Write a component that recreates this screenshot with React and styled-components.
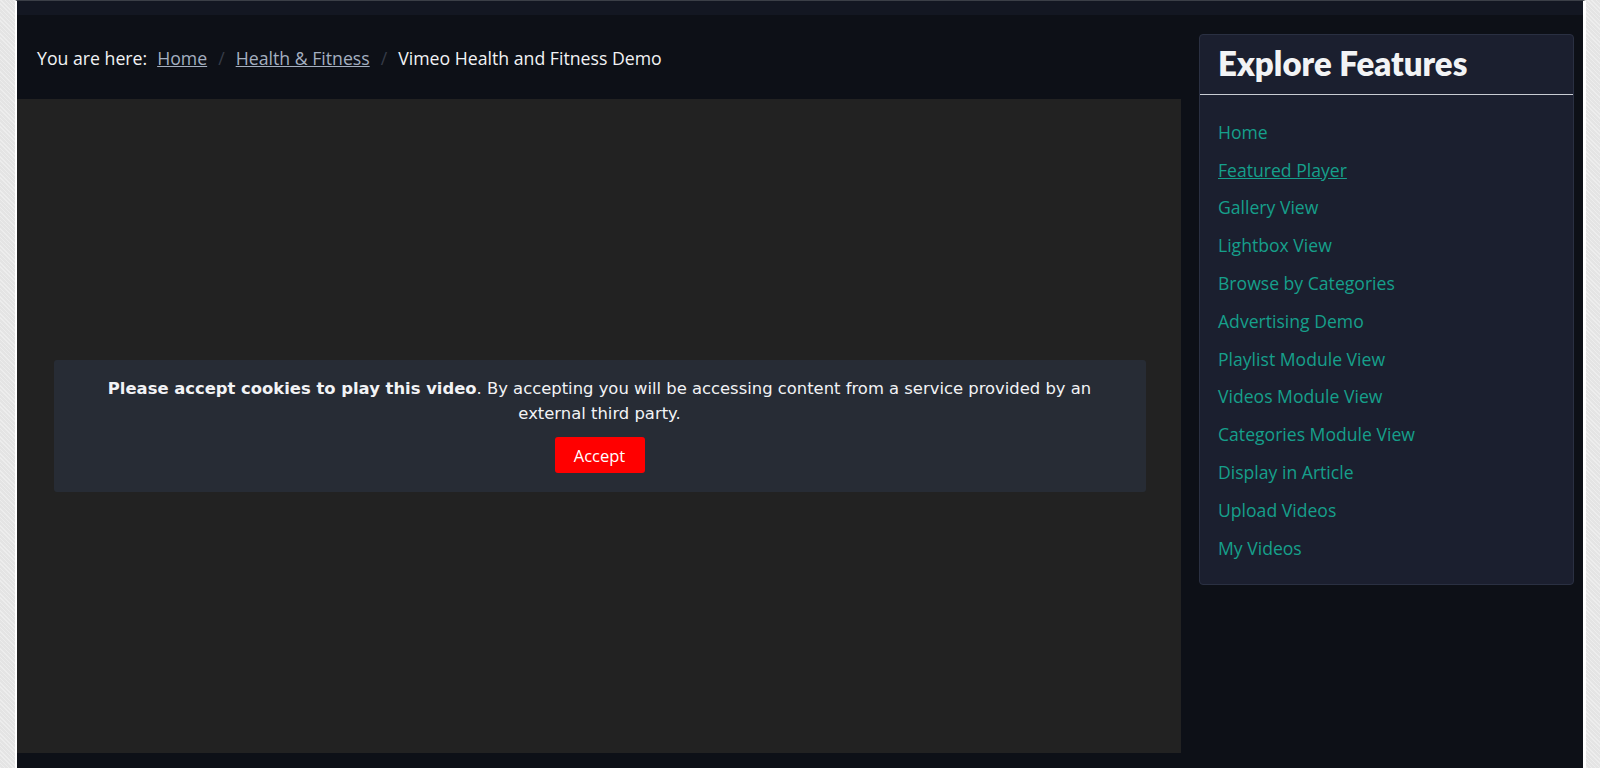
import * as React from "react";
import styled, { createGlobalStyle } from "styled-components";

const colors = {
  page: "#0d1017",
  band: "#131722",
  video: "#222222",
  notice: "#272c35",
  card: "#1b1f2f",
  cardBorder: "#2a3042",
  teal: "#169f8b",
  crumbLink: "#a4afc0",
  white: "#f2f3f5",
};

const GlobalStyle = createGlobalStyle`
  html, body {
    margin: 0;
    padding: 0;
    height: 100%;
    background-color: #e4e4e4;
    background-image: repeating-linear-gradient(45deg, rgba(255,255,255,0.35) 0 1px, transparent 1px 3px);
  }
  body {
    font-family: "Open Sans", "Noto Sans", sans-serif;
  }
  * { box-sizing: border-box; }
`;

const Frame = styled.div`
  margin-left: 15px;
  width: 1571px;
  height: 768px;
  border-left: 2px solid #ffffff;
  border-right: 3px solid #ffffff;
  border-top: 1px solid #3b3f47;
  background: ${colors.page};
  overflow: hidden;
`;

const TopBand = styled.div`
  height: 14px;
  background: ${colors.band};
`;

const Body = styled.div`
  display: flex;
  align-items: flex-start;
  gap: 18px;
`;

const Main = styled.main`
  width: 1164px;
  flex-shrink: 0;
`;

const Breadcrumb = styled.nav`
  height: 84px;
  display: flex;
  align-items: center;
  padding: 2px 0 0 20px;
  font-size: 17.7px;
  color: ${colors.white};
`;

const CrumbLabel = styled.span`
  margin-right: 10px;
`;

const CrumbLink = styled.a`
  color: ${colors.crumbLink};
  text-decoration: underline;
`;

const Divider = styled.span`
  color: #363c48;
  padding: 0 11px;
`;

const Player = styled.div`
  width: 1164px;
  height: 654px;
  background: ${colors.video};
  display: flex;
  align-items: center;
  justify-content: center;
`;

const Notice = styled.div`
  width: 1092px;
  margin-left: 1px;
  padding: 16px 40px 19px;
  background: ${colors.notice};
  border-radius: 3px;
  text-align: center;
  color: ${colors.white};
  font-family: "DejaVu Sans", Verdana, sans-serif;
  font-size: 16.4px;
  line-height: 25px;
`;

const AcceptButton = styled.button`
  margin-top: 11px;
  width: 90px;
  height: 36px;
  border: none;
  border-radius: 3px;
  background: #ff0000;
  color: #ffffff;
  font-family: "Open Sans", "Noto Sans", sans-serif;
  font-size: 16.5px;
  cursor: pointer;
`;

const Sidebar = styled.aside`
  width: 375px;
  margin-top: 19px;
  background: ${colors.card};
  border: 1px solid ${colors.cardBorder};
  border-radius: 4px;
`;

const SideTitle = styled.h3`
  margin: 0;
  padding: 8px 19px 11px 18px;
  font-family: Lato, "Open Sans", sans-serif;
  font-weight: 800;
  font-size: 33px;
  line-height: 40px;
  color: ${colors.white};
  border-bottom: 1px solid #c9ccd3;
`;

const LinkList = styled.ul`
  list-style: none;
  margin: 0;
  padding: 18px 19px 17px 18px;
`;

const LinkItem = styled.li`
  height: 37.8px;
  display: flex;
  align-items: center;
`;

const SideLink = styled.a`
  color: ${colors.teal};
  font-size: 17.6px;
  text-decoration: ${(p) => (p.$active ? "underline" : "none")};
`;

const features = [
  "Home",
  "Featured Player",
  "Gallery View",
  "Lightbox View",
  "Browse by Categories",
  "Advertising Demo",
  "Playlist Module View",
  "Videos Module View",
  "Categories Module View",
  "Display in Article",
  "Upload Videos",
  "My Videos",
];

export default function App() {
  return (
    <>
      <GlobalStyle />
      <Frame>
        <TopBand />
        <Body>
          <Main>
            <Breadcrumb>
              <CrumbLabel>You are here:</CrumbLabel>
              <CrumbLink href="#">Home</CrumbLink>
              <Divider>/</Divider>
              <CrumbLink href="#">Health &amp; Fitness</CrumbLink>
              <Divider>/</Divider>
              <span>Vimeo Health and Fitness Demo</span>
            </Breadcrumb>
            <Player>
              <Notice>
                <div>
                  <strong>Please accept cookies to play this video</strong>. By
                  accepting you will be accessing content from a service provided
                  by an external third party.
                </div>
                <AcceptButton>Accept</AcceptButton>
              </Notice>
            </Player>
          </Main>
          <Sidebar>
            <SideTitle>Explore Features</SideTitle>
            <LinkList>
              {features.map((f) => (
                <LinkItem key={f}>
                  <SideLink href="#" $active={f === "Featured Player"}>
                    {f}
                  </SideLink>
                </LinkItem>
              ))}
            </LinkList>
          </Sidebar>
        </Body>
      </Frame>
    </>
  );
}
